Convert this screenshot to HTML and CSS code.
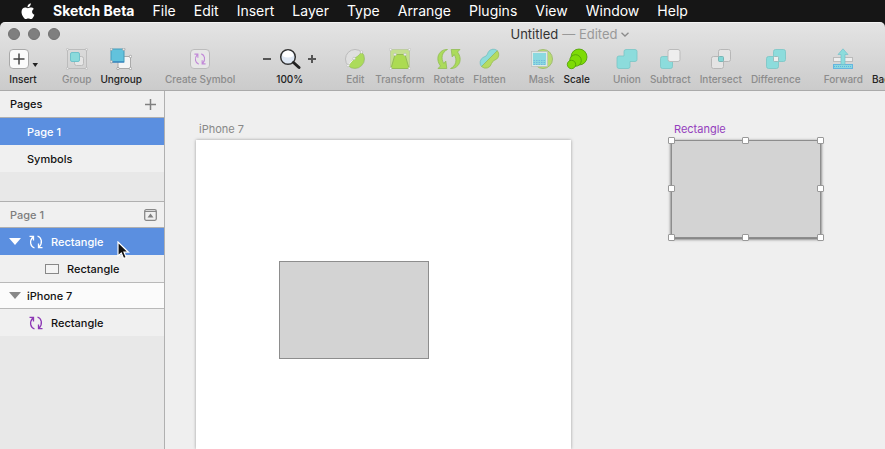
FILE: index.html
```html
<!DOCTYPE html>
<html lang="en">
<head>
    <meta charset="UTF-8">
    <meta name="viewport" content="width=device-width, initial-scale=1.0">
    <title>Untitled</title>
    <link rel="stylesheet" href="styles.css">
</head>
<body>
    <!-- Shared icon shapes -->
    <svg class="defs" width="0" height="0" aria-hidden="true">
        <symbol id="sync" viewBox="0 0 14 14">
            <path d="M5.500 13C1.500 11.500 0 6.500 3.800 2M.5 1.300h4v4.200M8.500 1c4 1.500 5.500 6.500 1.700 11M13.500 12.700h-4V8.500" fill="none" stroke="currentColor" stroke-width="1.300"/>
        </symbol>
    </svg>

    <!-- System menu bar -->
    <nav class="menubar">
        <button class="menu apple" aria-label="Apple menu">
            <svg width="14" height="17" viewBox="0 0 14 17"><path fill="#fff" d="M9.800.3c.1 1.200-.4 2.200-1 2.900-.6.700-1.500 1.100-2.300 1C6.400 3.100 6.900 2.100 7.500 1.500 8.100.8 9 .4 9.800.3zM12.800 5.900c-1.100.7-1.700 1.600-1.700 2.800 0 1.300.8 2.400 2.300 3-.3 1-.8 1.900-1.400 2.700-.6.900-1.200 1.700-2.200 1.700-1 0-1.300-.6-2.500-.6s-1.600.6-2.500.6c-1 0-1.700-.9-2.300-1.800C1.300 12.600.5 10.700.5 8.900c0-2.900 1.900-4.400 3.700-4.400 1 0 1.800.7 2.700.7.800 0 1.900-.7 3.100-.7 1.200 0 2.200.5 2.800 1.400z"/></svg>
        </button>
        <button class="menu app">Sketch Beta</button>
        <button class="menu">File</button>
        <button class="menu">Edit</button>
        <button class="menu">Insert</button>
        <button class="menu">Layer</button>
        <button class="menu">Type</button>
        <button class="menu">Arrange</button>
        <button class="menu">Plugins</button>
        <button class="menu">View</button>
        <button class="menu">Window</button>
        <button class="menu">Help</button>
    </nav>

    <div class="window">
        <header class="chrome">
            <div class="titlebar">
                <div class="lights">
                    <button class="light" aria-label="Close"></button>
                    <button class="light" aria-label="Minimize"></button>
                    <button class="light" aria-label="Zoom window"></button>
                </div>
                <button class="title">Untitled <span class="edited">— Edited</span>
                    <svg width="8" height="5" viewBox="0 0 8 5"><path d="M.5.7 4 4 7.500.7" fill="none" stroke="#8c8c8c" stroke-width="1.300"/></svg>
                </button>
            </div>

            <div class="toolbar">
                <div class="group">
                    <button class="tool on">
                        <svg width="32" height="22" viewBox="0 0 32 22"><rect x="2.500" y="1.500" width="19" height="19" rx="3.500" fill="#fbfbfb" stroke="#a9a9a9"/><path d="M12 5.500v11M6.500 11h11" stroke="#444" stroke-width="1.500"/><path d="M25.500 15h5.500l-2.750 4z" fill="#222"/></svg>
                        Insert
                    </button>
                </div>
                <div class="group">
                    <button class="tool">
                        <svg width="22" height="22" viewBox="0 0 22 22"><rect x="1.500" y="1.500" width="19" height="19" fill="none" stroke="#bcbcbc"/><rect x="8.500" y="8.500" width="9" height="9" rx="2" fill="#e5e5e5" stroke="#bbb"/><rect x="4.500" y="4.500" width="9" height="9" rx="1.500" fill="#8adadb" stroke="#6fc2cb"/><g fill="#eee" stroke="#bbb" stroke-width=".8"><circle cx="1.500" cy="1.500" r="1.100"/><circle cx="20.500" cy="1.500" r="1.100"/><circle cx="1.500" cy="20.500" r="1.100"/><circle cx="20.500" cy="20.500" r="1.100"/></g></svg>
                        Group
                    </button>
                    <button class="tool on">
                        <svg width="22" height="22" viewBox="0 0 22 22"><rect x="8" y="8.500" width="12.500" height="12" fill="#f5f5f5" stroke="#aaa"/><rect x="1" y="1" width="13" height="13" fill="#62c2dc" stroke="#459bbb"/><path d="M1 14h13" stroke="#2d77bb"/><g fill="#fff" stroke="#999" stroke-width=".8"><circle cx="1.200" cy="1.200" r="1.200"/><circle cx="13.800" cy="1.200" r="1.200"/><circle cx="1.200" cy="13.800" r="1.200"/><circle cx="20.500" cy="8.500" r="1.200"/><circle cx="8" cy="20.500" r="1.200"/><circle cx="20.500" cy="20.500" r="1.200"/></g></svg>
                        Ungroup
                    </button>
                </div>
                <div class="group">
                    <button class="tool">
                        <svg width="22" height="22" viewBox="0 0 22 22"><rect x="1.500" y="1.500" width="19" height="19" rx="3.500" fill="#e7e7e7" stroke="#bcbcbc"/><use href="#sync" x="5" y="5" width="12" height="12" color="#c28ad8"/></svg>
                        Create Symbol
                    </button>
                </div>
                <div class="group zoom">
                    <button class="step" aria-label="Zoom out"><svg width="8" height="22" viewBox="0 0 8 22"><path d="M0 11h8" stroke="#555" stroke-width="2"/></svg></button>
                    <button class="tool on">
                        <svg width="22" height="22" viewBox="0 0 22 22"><circle cx="9" cy="9" r="7.300" fill="#dfe8f4" stroke="#333" stroke-width="1.500"/><path d="M3.500 8a5.500 5.500 0 0 1 11 0q-5.500 3-11 0" fill="#fff"/><path d="m14.500 14.500 5.500 5" stroke="#222" stroke-width="3" stroke-linecap="round"/></svg>
                        100%
                    </button>
                    <button class="step" aria-label="Zoom in"><svg width="8" height="22" viewBox="0 0 8 22"><path d="M0 11h8M4 7v8" stroke="#555" stroke-width="2"/></svg></button>
                </div>
                <div class="group">
                    <button class="tool">
                        <svg width="22" height="22" viewBox="0 0 22 22"><circle cx="11" cy="11" r="9.500" fill="#dfdfdf" stroke="#bbb"/><path d="M17.500 4A9.500 9.500 0 1 1 4 17.500C7 16 7 13 10 10.500 13 9 15 7.500 17.500 4z" fill="#acdb5b" stroke="#9bc75a" stroke-width=".8"/><path d="m4 17.500 6-7" stroke="#f3f3f3"/><g fill="#f5f5f5" stroke="#bbb" stroke-width=".7"><circle cx="17.500" cy="4" r="1.300"/><circle cx="10" cy="10.500" r="1.300"/><circle cx="4" cy="17.500" r="1.300"/></g></svg>
                        Edit
                    </button>
                    <button class="tool">
                        <svg width="22" height="22" viewBox="0 0 22 22"><rect x="1.500" y="1.500" width="19" height="19" fill="#c4df90" stroke="#bdcda0"/><path d="M6 6.500h10l4 14H2z" fill="#acdb52" stroke="#94bc55"/><g fill="#f5f5f5" stroke="#bbb" stroke-width=".7"><circle cx="1.500" cy="1.500" r="1.200"/><circle cx="20.500" cy="1.500" r="1.200"/><circle cx="6" cy="6.500" r="1.200"/><circle cx="16" cy="6.500" r="1.200"/><circle cx="1.500" cy="20.500" r="1.200"/><circle cx="20.500" cy="20.500" r="1.200"/></g></svg>
                        Transform
                    </button>
                    <button class="tool">
                        <svg width="26" height="22" viewBox="0 0 26 22"><g fill="#acdb5b" stroke="#91bc56" stroke-width=".8"><path id="turn" d="M11.500 1.500C3.500 1-1.500 10 4.500 18L2 20.500h8.800L9.800 13 7.800 15.500C4.500 10 6 4 11.500 1.500z"/><use href="#turn" transform="rotate(180 13 11)"/></g></svg>
                        Rotate
                    </button>
                    <button class="tool">
                        <svg width="22" height="22" viewBox="0 0 22 22"><path d="M3.500 18.500A6 6 0 0 1 5 9.500Q8.500 8.500 9.500 6A6 6 0 0 1 19.300 2.700z" fill="#8edcda" stroke="#73bfc2" stroke-width=".8"/><path d="M19.300 2.700A5.800 5.800 0 0 1 18.500 11.200Q15 12 13.500 15.500A6 6 0 0 1 3.500 18.500z" fill="#b5db61" stroke="#98bd5a" stroke-width=".8"/></svg>
                        Flatten
                    </button>
                </div>
                <div class="group">
                    <button class="tool">
                        <svg width="22" height="22" viewBox="0 0 22 22"><circle cx="12" cy="11" r="9.500" fill="#b9dc70" stroke="#a1bd72"/><rect x=".5" y="3.500" width="16" height="15" fill="#dfe9e5" stroke="#bbb" stroke-width=".7"/><rect x="2" y="5" width="13" height="12" fill="#8bd9df"/><path d="M2.500 12.500h12M2.500 14.500h12M2.500 16.500h12" stroke="#70b9df" stroke-dasharray="1.500 1"/></svg>
                        Mask
                    </button>
                    <button class="tool on">
                        <svg width="22" height="22" viewBox="0 0 22 22"><g fill="#7edb05" stroke="#4c9c05" stroke-width=".8"><circle cx="13" cy="9" r="8"/><circle cx="9.500" cy="12.500" r="5.800"/><circle cx="5.500" cy="16.500" r="4.200"/></g></svg>
                        Scale
                    </button>
                </div>
                <div class="group">
                    <button class="tool">
                        <svg width="22" height="22" viewBox="0 0 22 22"><path d="M10 1.500h9q2 0 2 2v8q0 2-2 2h-5v5q0 2-2 2H3q-2 0-2-2V10q0-2 2-2h5V3.500q0-2 2-2z" fill="#8cdcdc" stroke="#79c5c5" stroke-width=".8"/></svg>
                        Union
                    </button>
                    <button class="tool">
                        <svg width="22" height="22" viewBox="0 0 22 22"><rect x="1.500" y="8.500" width="12" height="12" rx="2" fill="#8cdcdc" stroke="#79c5c5" stroke-width=".8"/><rect x="9" y="1.500" width="12" height="12" rx="2" fill="#eee" stroke="#bbb"/></svg>
                        Subtract
                    </button>
                    <button class="tool">
                        <svg width="22" height="22" viewBox="0 0 22 22"><g fill="#e4e4e4" stroke="#b7b7b7"><rect x="1.500" y="8.500" width="12" height="12" rx="2"/><rect x="8.500" y="1.500" width="12" height="12" rx="2"/></g><rect x="8.500" y="8.500" width="5" height="5" rx="1" fill="#83d7d7" stroke="#78b5b5"/></svg>
                        Intersect
                    </button>
                    <button class="tool">
                        <svg width="22" height="22" viewBox="0 0 22 22"><g fill="#8cdcdc" stroke="#79c5c5" stroke-width=".8"><rect x="1.500" y="8.500" width="12" height="12" rx="2"/><rect x="8.500" y="1.500" width="12" height="12" rx="2"/></g><rect x="8.500" y="8.500" width="5" height="5" rx="1" fill="#eee" stroke="#9bb"/></svg>
                        Difference
                    </button>
                </div>
                <div class="group">
                    <button class="tool">
                        <svg width="22" height="22" viewBox="0 0 22 22"><rect x="1.500" y="9.500" width="19" height="4" fill="#eee" stroke="#bbb"/><rect x="1.500" y="16.500" width="19" height="4" fill="#8bd9e0" stroke="#65b5df"/><path d="M2 18.500h18" stroke="#60b2df" stroke-dasharray="1 1"/><path d="m11 .8 5 5.700h-3v10H9v-10H6z" fill="#8cdcdc" stroke="#74c1cc" stroke-width=".7"/></svg>
                        Forward
                    </button>
                    <button class="tool on">
                        <svg width="22" height="22" viewBox="0 0 22 22"><rect x="1.500" y="1.500" width="19" height="4" fill="#62c2dc"/><path d="m11 20-5-6h3V5h4v9h3z" fill="#62c2dc"/></svg>
                        Backward
                    </button>
                </div>
            </div>
        </header>

        <main class="workspace">
            <aside class="sidebar">
                <div class="panel-head">
                    <span>Pages</span>
                    <button class="icon-btn" aria-label="Add page"><svg width="13" height="13" viewBox="0 0 13 13"><path d="M6.500 1v11M1 6.500h11" stroke="#808080" stroke-width="1.500"/></svg></button>
                </div>
                <ul class="pages">
                    <li class="row selected">Page 1</li>
                    <li class="row">Symbols</li>
                </ul>

                <div class="panel-head muted">
                    <span>Page 1</span>
                    <button class="icon-btn" aria-label="Hide pages"><svg width="13" height="12" viewBox="0 0 13 12"><rect x=".7" y=".7" width="11.600" height="10.600" rx="1.500" fill="none" stroke="#888" stroke-width="1.300"/><path d="M1 2.500h11" stroke="#888"/><path d="m6.500 4.500 3 4h-6z" fill="#808080"/></svg></button>
                </div>
                <ul class="layers">
                    <li class="row layer selected">
                        <svg class="arrow" width="12" height="7" viewBox="0 0 12 7"><path d="M0 0h12L6 7z" fill="currentColor"/></svg>
                        <svg width="14" height="14"><use href="#sync"/></svg>
                        Rectangle
                        <svg class="cursor" width="13" height="19" viewBox="0 0 13 19"><path d="M1 1v14l3.300-3 2.300 5.500 2.700-1.100L7 11.200h4.500z" fill="#111" stroke="#fff" stroke-width="1.200"/></svg>
                    </li>
                    <li class="row layer child">
                        <svg width="14" height="10" viewBox="0 0 14 10"><rect x=".5" y=".5" width="13" height="9" fill="#f4f4f4" stroke="#888"/></svg>
                        Rectangle
                    </li>
                    <li class="row layer artboard-row">
                        <svg class="arrow" width="12" height="7" viewBox="0 0 12 7"><path d="M0 0h12L6 7z" fill="currentColor"/></svg>
                        iPhone 7
                    </li>
                    <li class="row layer symbol">
                        <svg width="14" height="14"><use href="#sync"/></svg>
                        Rectangle
                    </li>
                </ul>
            </aside>

            <section class="canvas">
                <div class="artboard">
                    <span class="label">iPhone 7</span>
                    <div class="shape"></div>
                </div>
                <div class="selection">
                    <span class="label">Rectangle</span>
                    <i class="handle top left"></i>
                    <i class="handle top center"></i>
                    <i class="handle top right"></i>
                    <i class="handle middle left"></i>
                    <i class="handle middle right"></i>
                    <i class="handle bottom left"></i>
                    <i class="handle bottom center"></i>
                    <i class="handle bottom right"></i>
                </div>
            </section>
        </main>
    </div>
</body>
</html>
```
FILE: styles.css
```css
* {
    box-sizing: border-box;
}

body {
    display: flex;
    flex-direction: column;
    height: 100vh;
    margin: 0;
    overflow: hidden;
    background: #161616;
    color: #111;
    font: 500 11px/14px Inter, "Liberation Sans", sans-serif;
}

button {
    margin: 0;
    padding: 0;
    border: none;
    background: none;
    color: inherit;
    font: inherit;
}

ul {
    margin: 0;
    padding: 0;
    list-style: none;
}

svg {
    display: block;
    flex: none;
}

.defs {
    position: absolute;
}

/* Menu bar */
.menubar {
    display: flex;
    flex: none;
    align-items: center;
    gap: 18px;
    height: 22px;
    padding-left: 21px;
    color: #fff;
    font-size: 14px;
    font-weight: 400;
    line-height: 22px;
    white-space: nowrap;
}

.app {
    font-weight: 700;
}

/* Window title and toolbar */
.window {
    display: flex;
    flex: 1;
    flex-direction: column;
    min-height: 0;
    border-radius: 5px 5px 0 0;
    overflow: hidden;
}

.chrome {
    flex: none;
    border-top: 1px solid #f3f3f3;
    border-bottom: 1px solid #aaa;
    background: linear-gradient(#e4e4e4, #cbcbcb);
}

.titlebar {
    display: grid;
    grid-template-columns: 1fr auto 1fr;
    align-items: center;
    height: 22px;
    padding: 0 8px;
}

.lights {
    display: flex;
    gap: 8px;
}

.light {
    width: 12px;
    height: 12px;
    border: 1px solid #727272;
    border-radius: 50%;
    background: #7f7f7f;
}

.title {
    display: flex;
    grid-column: 2;
    align-items: center;
    gap: 4px;
    margin-left: 255px;
    color: #333;
    font-size: 13px;
    font-weight: 400;
    white-space: nowrap;
}

.edited {
    color: #999;
}

.toolbar {
    display: flex;
    gap: 23px;
    padding: 3px 0 4px 7px;
    font-size: 10px;
}

.group {
    display: flex;
    flex: none;
    gap: 9px;
}

.zoom {
    gap: 5px;
    margin: 0 5px;
}

.tool {
    display: flex;
    flex-direction: column;
    align-items: center;
    gap: 2px;
    color: #8c8c8c;
    white-space: nowrap;
}

.on {
    color: #222;
}

.step {
    align-self: flex-start;
}

/* Sidebar */
.workspace {
    display: flex;
    flex: 1;
    min-height: 0;
    background: #efefef;
}

.sidebar {
    flex: none;
    width: 165px;
    border-right: 1px solid #b0b0b0;
    background: #e8e8e8;
}

.panel-head {
    display: flex;
    align-items: center;
    justify-content: space-between;
    height: 27px;
    padding: 0 7px 0 10px;
    border-bottom: 1px solid #b0b0b0;
    background: #f0f0f0;
}

.muted {
    height: 26px;
    color: #7d7d7d;
}

.pages {
    height: 84px;
    border-bottom: 1px solid #b0b0b0;
}

.row {
    display: flex;
    align-items: center;
    height: 27px;
    padding-left: 27px;
    background: #f0f0f0;
}

.layer {
    position: relative;
    gap: 8px;
    padding-left: 9px;
}

.selected {
    background: #5b8fe0;
    color: #fff;
}

.child {
    padding-left: 45px;
}

.artboard-row {
    gap: 6px;
    border-top: 1px solid #b9b9b9;
    border-bottom: 1px solid #b9b9b9;
    background: #fbfbfb;
}

.artboard-row .arrow {
    color: #888;
}

.symbol {
    padding-left: 29px;
}

.symbol svg {
    color: #8d38b5;
}

.cursor {
    position: absolute;
    top: 13px;
    left: 117px;
    z-index: 1;
}

/* Canvas */
.canvas {
    position: relative;
    flex: 1;
    overflow: hidden;
}

.artboard {
    position: absolute;
    top: 49px;
    bottom: 0;
    left: 31px;
    width: 375px;
    background: #fff;
    box-shadow: 0 0 3px rgba(0, 0, 0, 0.35);
}

.label {
    position: absolute;
    top: -18px;
    left: 3px;
    color: #888;
    font-weight: 400;
}

.shape,
.selection {
    position: absolute;
    width: 150px;
    height: 98px;
    border: 1px solid #8d8d8d;
    background: #d3d3d3;
}

.shape {
    top: 121px;
    left: 83px;
}

.selection {
    top: 49px;
    left: 506px;
    box-shadow: 0 1px 3px rgba(0, 0, 0, 0.7);
}

.selection .label {
    top: -19px;
    left: 2px;
    color: #9440bd;
}

.handle {
    position: absolute;
    width: 7px;
    height: 7px;
    margin: -4px;
    border: 1px solid #999;
    border-radius: 1px;
    background: #fff;
}

.top {
    top: 0;
}

.middle {
    top: 50%;
}

.bottom {
    bottom: 0;
}

.left {
    left: 0;
}

.center {
    left: 50%;
}

.right {
    right: 0;
}
```
